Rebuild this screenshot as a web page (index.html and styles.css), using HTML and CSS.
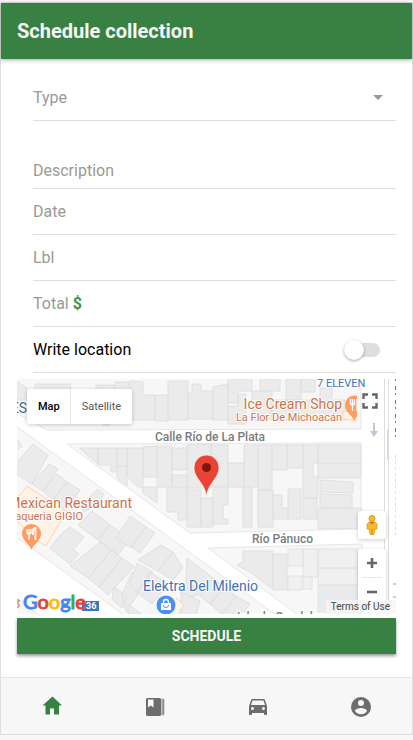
FILE: index.html
```html
<!DOCTYPE html>
<html lang="en">
<head>
<meta charset="utf-8">
<meta name="viewport" content="width=device-width, initial-scale=1">
<title>Schedule collection</title>
<link rel="stylesheet" href="styles.css">
</head>
<body>
<div class="app">
  <header class="toolbar"><h1>Schedule collection</h1></header>
  <main class="content">
    <form class="form">
      <div class="item">
        <label for="type">Type</label>
        <select id="type" class="field"><option value=""></option></select>
        <svg class="caret" viewBox="0 0 10 5" aria-hidden="true"><path d="M0 0h10L5 5z"/></svg>
      </div>
      <div class="item item-spaced"><label for="description">Description</label><input id="description" class="field" type="text"></div>
      <div class="item"><label for="date">Date</label><input id="date" class="field" type="text"></div>
      <div class="item"><label for="lbl">Lbl</label><input id="lbl" class="field" type="text"></div>
      <div class="item"><label for="total">Total <b>$</b></label><input id="total" class="field" type="text"></div>
      <div class="item item-toggle"><label for="write">Write location</label><input id="write" class="toggle" type="checkbox"></div>

      <div class="map">
        <svg class="tiles" viewBox="17 379 379 235" preserveAspectRatio="xMidYMid slice">
          <rect x="17" y="379" width="379" height="235" fill="#fff"/>
          <g fill="#f7f7f7" stroke="#e6e6e6">
            <path d="M16 378H361V429L47 430L16 413z"/>
            <path d="M67 444L361 443V529L190 533z"/>
            <path d="M16 426L276 615H124L16 537z"/>
            <path d="M208 548L362 544V615H298z"/>
            <path d="M16 598L24 603L38 615H16z"/>
          </g>
          <g fill="#ebebeb" stroke="#e0e0e0">
            <path d="M16 381L27 388V400H16zM35 384H70L72 392H35zM96 385H115V392H96zM115 382H129V420H115zM103 420H110V425H103z"/>
            <path d="M130 381L143 382V395H155V420H130zM155 395H168V421H155zM168 381H188V420H168zM188 393H192V384H201V391H213V419H188zM213 387L228 384V420H213zM228 379H252V391H238V403H228zM238 394H246V424H228V406H238zM252 391H272V420H252zM260 379H280V391H260zM286 379H301V400H286zM301 379H315V392H301zM272 400H345V420H272zM320 388H332V398H320z"/>
            <path d="M79 448H98V464zM98 448H117V472H111V465H98zM117 448H127V466H117zM117 466H127V486L117 478zM127 448H143V487H138L127 476zM143 447L157 446V477H143zM157 446H172V487H157zM172 448H187V470H172zM172 475H187V490H172zM187 445L211 444V488H187zM211 445H228V487H211zM244 445H258V487H244zM228 463H244V487H228zM143 487H157V503L143 493z"/>
            <path d="M258 445H272V490H258zM272 445H287V470H272zM287 445H303V468H287zM303 445H318V463H313V477H318V498H303zM318 445H361V478H318zM318 463H361M320 480L353 482V493L320 492zM320 494L352 495V508H320zM318 508H361V528L318 529zM303 498H317V519H303zM288 489H301V519H288zM273 495H282V508H288V519H273zM258 490H273V527H258zM243 487H252V527H243z"/>
            <path d="M167 487H187V520H178V512H167zM187 490H201V527H187zM201 498H213V527H201zM213 487H228V505H223V519H228V524H213z"/>
            <path d="M18 440L22 446L17 450M33 444L48 455L32 484L16 474V463zM49 464L58 469L43 491L32 484zM57 474L67 482L53 500L43 491zM67 482L80 490L66 511L53 500zM98 489L104 494L96 506L84 512L82 504z"/>
            <path d="M70 527L84 537L73 550L79 554L70 564L50 548L60 535zM92 511L110 525L98 540L78 525zM110 525L130 538L118 555L98 540zM100 542L112 550L88 578L70 566zM112 550L122 558L99 587L88 578zM122 558L134 567L108 595L99 587zM114 587L127 596L122 608L112 599zM132 572L146 582L126 612L122 595z"/>
            <path d="M130 516L146 527L131 548L116 538zM146 527L155 533L140 553L131 547zM161 545L173 552L158 571L138 560zM158 571L173 552L183 568L173 580zM137 563L153 572L137 592L130 584zM150 572L168 584L152 604L137 592zM187 558L213 578L199 595L185 598z"/>
            <path d="M213 578L224 587L210 604L200 596zM224 587L236 596L222 614L210 604zM236 596L250 604L242 615H222zM181 592L200 601L196 615H181zM128 604L141 614H128z"/>
            <path d="M243 551H273V589L251 573L237 565L243 562zM273 554H287V577L288 590H273z"/>
          </g>
          <g fill="#f0f0f0" stroke="#e2e2e2">
            <path d="M288 549H303V566H288zM303 549H318V577H303zM318 549H358V568H318zM318 568H358V585H318zM288 576H302V590H288zM303 577H312V589H303z"/>
            <path d="M318 585H361V615H318z" fill="#e9eaec"/>
          </g>
          <path d="M16 500L27 486L42 496L66 512L46 546L36 540L16 520z" fill="#fff3e5" stroke="#fbd6ad"/>
          <path d="M176 598L184 605L178 615M343 412L356 410V421L343 419z" fill="#fff3e5" stroke="#fbd6ad"/>
          <g fill="none" stroke="#dedede"><path d="M384.500 379V614M388.500 379V614"/><path d="M387.500 430V460" stroke="#ddd5cb"/><path d="M395.500 379V440" stroke="#777" stroke-dasharray="2 5 4 3"/><path d="M395.500 455V535" stroke-dasharray="3 3"/><path d="M393 584H396M393 597H396" stroke="#d98b6b"/></g>
          <path d="M373 423h2v8h3l-4 6l-4-6h3z" fill="#c1c6d8"/>
          <g class="label">
            <text class="road" x="155" y="441">Calle Río de La Plata</text>
            <text class="road" x="252" y="543">Río Pánuco</text>
            <text class="road" x="237" y="621">Isla de Guadalupe</text>
            <text class="slate" x="27" y="413" text-anchor="end">ES</text>
            <text class="blue small" x="317" y="387">7 ELEVEN</text>
            <text class="blue" x="143" y="591">Elektra Del Milenio</text>
            <text class="orange" x="342" y="409" text-anchor="end">Ice Cream Shop</text>
            <text class="orange small" x="342" y="421" text-anchor="end">La Flor De Michoacán</text>
            <text class="orange" x="132" y="508" text-anchor="end">Mexican Restaurant</text>
            <text class="orange small" x="83" y="520" text-anchor="end">Taqueria GIGIO</text>
          </g>
          <defs><clipPath id="tile-edge"><rect x="340" y="390" width="17" height="34"/></clipPath></defs>
          <g clip-path="url(#tile-edge)">
            <path d="M354 421C353 415 345 413 345 405a9.500 9.500 0 0 1 19 0C364 413 356 415 354 421z" fill="#ff9b63"/>
            <path d="M350.500 399v4q0 2 2 2v6M352.500 399v5M354.500 399v4q0 2-2 2M357 399v12" fill="none" stroke="#fff" stroke-width="1.300"/>
          </g>
          <path d="M31.500 550C30.500 545 22 541 22 533.500a9.500 9.500 0 0 1 19 0C41 541 32.500 545 31.500 550z" fill="#ff9b63"/>
          <path d="M27 529v3q0 2 2 2v6M29 529v4M31 529v3q0 2-2 2" fill="none" stroke="#fff" stroke-width="1.400"/>
          <path d="M33 535v-4q0-3 2.500-3v12" fill="none" stroke="#fff" stroke-width="1.800"/>
          <circle cx="166" cy="605" r="9.500" fill="#4b91f3"/>
          <path d="M161 603h10v7h-10z" fill="#fff"/><path d="M163.500 603v-1a2.500 2.500 0 0 1 5 0v1" fill="none" stroke="#fff" stroke-width="1.300"/><path d="M163.500 605a2.500 2.500 0 0 0 5 0" fill="none" stroke="#4b91f3"/>
          <path d="M206.500 497C205.500 483 194 479 194 467.500a12.500 12.500 0 0 1 25 0C219 479 207.500 483 206.500 497z" fill="#ea4335" stroke="#fff" stroke-width=".6"/>
          <circle cx="206.500" cy="467.500" r="4.500" fill="#7d1511"/>
          <rect x="82" y="601" width="17" height="10" fill="#3b75c4"/><text class="shield" x="86" y="609">36</text>
          <path d="M17 600h2v2h-2M17 604h2v3h-2" fill="none" stroke="#c46b6b"/>
        </svg>
        <div class="map-type"><button type="button" class="active">Map</button><button type="button">Satellite</button></div>
        <button type="button" class="fullscreen" aria-label="Toggle fullscreen"><svg viewBox="0 0 16 16"><path d="M1.500 6V1.500H6M10 1.500h4.500V6M14.500 10v4.500H10M6 14.500H1.500V10" fill="none" stroke="#666" stroke-width="2.400"/></svg></button>
        <div class="map-controls">
          <button type="button" class="pegman" aria-label="Street View"><svg viewBox="0 0 12 20"><circle cx="6" cy="3.500" r="3" fill="#fbb829" stroke="#d69a2d"/><path d="M3 7h6l2 2v5H9l-1 5.500H4L3 14H1V9z" fill="#fbb829" stroke="#d69a2d" stroke-width=".7"/><path d="M3.500 7h5L6 9.500z" fill="#d96b1c"/><path d="M6 14v5" stroke="#d08b20"/></svg></button>
          <div class="zoom">
            <button type="button" aria-label="Zoom in"><svg viewBox="0 0 12 12"><path d="M6 1v10M1 6h10" stroke="#666" stroke-width="2.600"/></svg></button>
            <button type="button" aria-label="Zoom out"><svg viewBox="0 0 12 12"><path d="M1 6h10" stroke="#666" stroke-width="2.600"/></svg></button>
          </div>
        </div>
        <div class="google"><span class="g-blue">G</span><span class="g-red">o</span><span class="g-yellow">o</span><span class="g-blue">g</span><span class="g-green">l</span><span class="g-red">e</span></div>
        <a class="terms" href="#terms">Terms of Use</a>
      </div>
      <button type="submit" class="submit">SCHEDULE</button>
    </form>
  </main>
  <nav class="tabs">
    <a class="active" href="#home" aria-label="Home"><svg viewBox="0 0 24 24"><path d="M10 20.500v-6h4v6h5v-9h3L12.500 2.500 2.500 11.500h3v9z"/></svg></a>
    <a href="#book" aria-label="Records"><svg viewBox="0 0 24 24"><path fill-rule="evenodd" d="M4.500 4H16.500Q18 4 18 5.500v15Q18 22 16.500 22H4.500Q3 22 3 20.500v-15Q3 4 4.500 4zM5 5.500v8l2.700-2 2.800 2v-8zM18.600 4.200q1 .3 1 1.300v15q0 1-1 1.300zM20.200 4.500q1 .3 1 1.300v14.400q0 1-1 1.300z"/></svg></a>
    <a href="#car" aria-label="Vehicle"><svg viewBox="0 0 24 24"><path d="M18.920 6.010C18.720 5.420 18.160 5 17.500 5h-11c-.66 0-1.210.42-1.420 1.010L3 12v8c0 .55.45 1 1 1h1c.55 0 1-.45 1-1v-1h12v1c0 .55.45 1 1 1h1c.55 0 1-.45 1-1v-8l-2.080-5.990zM6.500 16c-.83 0-1.500-.67-1.500-1.500S5.670 13 6.500 13s1.500.67 1.500 1.500S7.330 16 6.500 16zm11 0c-.83 0-1.500-.67-1.500-1.500s.67-1.500 1.500-1.500 1.500.67 1.500 1.500-.67 1.500-1.500 1.500zM5 11l1.500-4.500h11L19 11H5z"/></svg></a>
    <a href="#account" aria-label="Account"><svg viewBox="0 0 24 24"><path d="M12 3a10 10 0 1 0 0 20 10 10 0 0 0 0-20zm0 3a3 3 0 1 1 0 6 3 3 0 0 1 0-6zm0 14.200a7.200 7.200 0 0 1-6-3.220c.03-1.990 4-3.080 6-3.080 1.990 0 5.970 1.090 6 3.080a7.200 7.200 0 0 1-6 3.220z"/></svg></a>
  </nav>
</div>
</body>
</html>
```
FILE: styles.css
```css
* { box-sizing: border-box; }
body {
  margin: 0;
  padding: 2px 0 5px;
  min-height: 100vh;
  display: flex;
  background: #f7f7f7;
  font-family: Roboto, "Liberation Sans", sans-serif;
  font-size: 16px;
}
button, input, select { font: inherit; margin: 0; padding: 0; border: 0; background: none; color: inherit; }
.app {
  flex: 1;
  min-width: 0;
  display: flex;
  flex-direction: column;
  background: #fff;
  border: 1px solid #e0e0e0;
}
.toolbar {
  display: flex;
  align-items: center;
  height: 56px;
  padding: 0 16px;
  background: #388142;
  color: #f7f7f7;
  box-shadow: 0 1px 4px rgba(0, 0, 0, .35);
}
.toolbar h1 { margin: 0; font-size: 20px; font-weight: 700; line-height: 24px; }
.content { flex: 1; padding: 16px; }
.item {
  display: flex;
  align-items: center;
  height: 46px;
  margin-left: 16px;
  color: #999;
  line-height: 24px;
  border-bottom: 1px solid #dedede;
}
.item-spaced { height: 68px; align-items: flex-end; padding-bottom: 5px; }
.item b { color: #43944d; font-weight: 700; }
.field { flex: 1; min-width: 0; height: 24px; appearance: none; outline: 0; }
.caret { width: 10px; height: 5px; margin-right: 13px; fill: #999; }
.item-toggle { color: #000; justify-content: space-between; padding-right: 16px; }
.toggle {
  appearance: none;
  display: flex;
  align-items: center;
  width: 36px;
  height: 14px;
  border-radius: 7px;
  background: #dedede;
}
.toggle::before {
  content: "";
  flex: none;
  width: 20px;
  height: 20px;
  border-radius: 50%;
  background: #fff;
  box-shadow: 0 1px 3px rgba(0, 0, 0, .35);
}
.toggle:checked { justify-content: flex-end; }

.map { position: relative; height: 235px; margin-top: 6px; overflow: hidden; }
.tiles { display: block; width: 100%; height: 100%; }
.label text { paint-order: stroke; stroke: #fff; stroke-width: 2px; stroke-linejoin: round; font-size: 14px; }
.label .road { font-size: 12px; font-weight: 500; fill: #777c80; }
.label .slate { fill: #50657c; }
.label .blue { fill: #4272b5; }
.label .orange { fill: #cd7148; }
.label .small { font-size: 11px; }
.shield { fill: #fff; font-size: 9px; font-weight: 700; }
.map button { display: flex; align-items: center; justify-content: center; }
.map-type {
  position: absolute;
  top: 10px;
  left: 10px;
  display: flex;
  height: 35px;
  border-radius: 2px;
  background: #fff;
  box-shadow: 0 1px 4px rgba(0, 0, 0, .2);
  font-size: 11px;
  color: #565656;
}
.map-type button { padding: 0 11px; }
.map-type .active { padding-right: 10px; color: #000; font-weight: 500; border-right: 1px solid #e6e6e6; }
.fullscreen { position: absolute; top: 14px; right: 18px; width: 16px; height: 16px; }
.fullscreen svg { width: 16px; height: 16px; }
.map-controls {
  position: absolute;
  right: 10px;
  top: 132px;
  display: flex;
  flex-direction: column;
  gap: 10px;
}
.pegman, .zoom { width: 28px; border-radius: 2px; box-shadow: 0 1px 4px rgba(0, 0, 0, .2); }
.map .pegman { height: 28px; background: #fff; }
.pegman svg { width: 12px; height: 20px; }
.zoom { background: #fff; padding: 0 4px; }
.zoom button { width: 20px; height: 28px; }
.zoom button + button { border-top: 1px solid #e6e6e6; }
.zoom svg { width: 12px; height: 12px; }
.google {
  position: absolute;
  left: 6px;
  bottom: 0;
  font-family: Lato, sans-serif;
  font-size: 20px;
  line-height: 26px;
  font-weight: 400;
  -webkit-text-stroke: 1px currentColor;
}
.g-blue { color: #4285f4; }
.g-red { color: #ea4335; }
.g-yellow { color: #fbbc05; }
.g-green { color: #34a853; }
.terms {
  position: absolute;
  right: 0;
  bottom: 0;
  padding: 0 6px 0 5px;
  background: rgba(245, 245, 245, .75);
  color: #444;
  font-size: 10px;
  line-height: 14px;
  text-decoration: none;
}
.submit {
  display: block;
  width: 100%;
  height: 36px;
  margin-top: 4px;
  background: #388142;
  color: #f7f7f7;
  font-size: 14px;
  font-weight: 700;
  box-shadow: 0 2px 3px rgba(0, 0, 0, .4);
}
.tabs {
  display: flex;
  height: 57px;
  background: #f7f7f7;
  border-top: 1px solid #e6e6e6;
}
.tabs a { flex: 1; display: flex; align-items: center; justify-content: center; color: #6d6d6d; }
.tabs .active { color: #388142; }
.tabs svg { width: 24px; height: 24px; fill: currentColor; }
```
